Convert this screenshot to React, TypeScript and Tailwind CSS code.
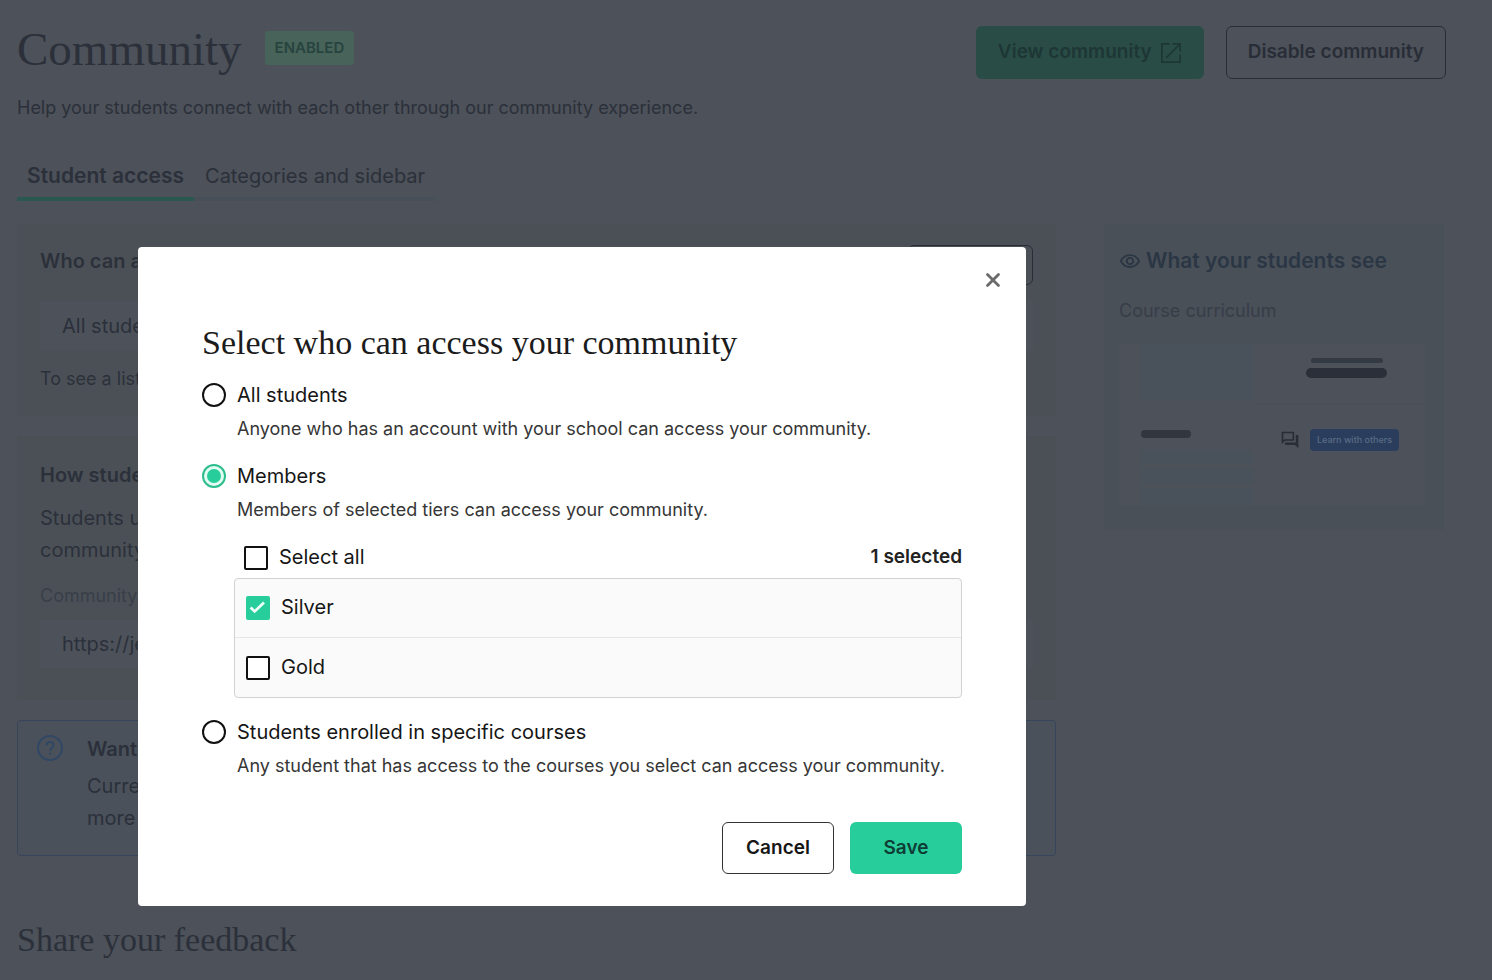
import React, { useState } from 'react';
import clsx from 'clsx';
import { X } from 'lucide-react';
import { MdOutlineForum, MdOutlineRemoveRedEye } from 'react-icons/md';

type Access = 'all' | 'members' | 'courses';

interface RadioOptionProps {
  value: Access;
  label: string;
  description: string;
  selected: Access;
  onSelect: (value: Access) => void;
  children?: React.ReactNode;
}

interface CheckOptionProps {
  label: string;
  checked: boolean;
  onChange: () => void;
}

const TIERS = ['Silver', 'Gold'];

const RadioOption: React.FC<RadioOptionProps> = ({ value, label, description, selected, onSelect, children }) => {
  const isSelected = selected === value;

  return (
    <div>
      <label className="flex h-8 items-center gap-[11px] text-[20px] text-[#161616]">
        <input
          type="radio"
          name="access"
          value={value}
          checked={isSelected}
          onChange={() => onSelect(value)}
          aria-describedby={`${value}-description`}
          className={clsx(
            'grid size-6 shrink-0 appearance-none place-items-center rounded-full border-2 before:rounded-full',
            isSelected
              ? 'border-[#2dbd8d] bg-[#e2fcf4] before:size-3.5 before:bg-[#27ce9b]'
              : 'border-[#111111] bg-white'
          )}
        />
        {label}
      </label>
      <p id={`${value}-description`} className="pl-[35px] text-[18px] leading-9 text-[#363636]">
        {description}
      </p>
      {children}
    </div>
  );
};

const CheckOption: React.FC<CheckOptionProps> = ({ label, checked, onChange }) => (
  <label className="flex items-start gap-[11px] text-[20px] leading-7 text-[#161616]">
    <span className="grid place-items-center pt-[3px]">
      <input
        type="checkbox"
        checked={checked}
        onChange={onChange}
        className={clsx(
          'col-start-1 row-start-1 size-6 appearance-none rounded-[2px]',
          checked ? 'bg-[#27ce9b]' : 'border-2 border-[#111111] bg-white'
        )}
      />
      {checked && (
        <svg viewBox="0 0 24 24" className="pointer-events-none col-start-1 row-start-1 size-6" aria-hidden="true">
          <path d="M4.6 11.4l4.1 4L18 6.6" fill="none" stroke="#effff9" strokeWidth="2.8" />
        </svg>
      )}
    </span>
    {label}
  </label>
);

// Small mock of the curriculum page with the community link
const CurriculumPreview: React.FC = () => (
  <div className="mr-1 grid grid-cols-[135px_1fr] bg-[#4d5159]">
    <div className="pl-[22px]">
      <div className="h-[56px] w-28 bg-[#49515a]"></div>
      <div className="mt-[30px] h-2 w-[50px] rounded-full bg-[#31363f]"></div>
      <div className="mt-3 h-[14px] w-28 bg-[#49515a]"></div>
      <div className="mt-1 h-[16px] w-28 bg-[#49515a]"></div>
      <div className="mt-1 h-[18px] w-28 bg-[#49515a]"></div>
    </div>
    <div>
      <div className="flex h-[61px] flex-col items-center gap-[5px] border-b border-[#4a4e56] pl-3.5 pt-3.5">
        <div className="h-[5px] w-[72px] rounded-full bg-[#343a43]"></div>
        <div className="h-[10px] w-[81px] rounded-full bg-[#2a2f39]"></div>
      </div>
      <div className="flex items-center gap-[10px] pl-[26px] pt-6">
        <MdOutlineForum className="size-5 text-[#282d37]" aria-hidden="true" />
        <a href="#learn" className="flex h-[22px] w-[89px] items-center justify-center rounded-[4px] bg-[#2b3d5c] text-[9px] font-medium text-[#5a6b85]">
          Learn with others
        </a>
      </div>
    </div>
  </div>
);

const CommunityPage: React.FC = () => (
  <div className="min-h-screen bg-[#4d5159] pb-4 pl-[17px] pr-[46px] pt-[26px] text-[#2b303a]">
    <header className="flex items-start justify-between">
      <div className="flex items-start">
        <h1 className="font-['Liberation_Serif',serif] text-[47px] leading-[46px]">Community</h1>
        <span className="ml-[23px] mt-[5px] rounded-[3px] bg-[#486359] px-[10px] text-[15px] font-semibold leading-[34px] text-[#27443f]">
          ENABLED
        </span>
      </div>
      <div className="flex gap-[22px] text-[19px] font-semibold">
        <button className="flex h-[53px] items-center gap-2 rounded-[6px] bg-[#294d46] px-[22px] text-[#1e3635]">
          View community
          <svg viewBox="0 0 22 22" className="size-[22px]" fill="none" stroke="currentColor" strokeWidth="1.7" aria-hidden="true">
            <path d="M9.5 1.9H1.9v18.2h18.2v-7.6M12.5 1.9h7.6v7.6M19.8 2.2L6 16" />
          </svg>
        </button>
        <button className="h-[53px] rounded-[6px] border border-[#282d37] px-[21px] text-[#282d37]">Disable community</button>
      </div>
    </header>
    <p className="mt-[15px] text-[18px] leading-7">Help your students connect with each other through our community experience.</p>

    <nav className="mt-[38px] flex leading-8">
      <a href="#access" className="border-b-4 border-[#2a5750] px-[10px] pb-[5px] text-[21px] font-semibold">Student access</a>
      <a href="#categories" className="border-b-4 border-[#475058] px-[11px] pb-[5px] text-[20px]">Categories and sidebar</a>
    </nav>

    <div className="mt-[23px] grid grid-cols-[1fr_340px] items-start gap-12 pr-0.5">
      <main>
        <section className="h-[192px] bg-[#4b5057] px-[23px] pt-[21px]">
          <div className="flex h-10 items-start justify-between">
            <h2 className="text-[20px] font-semibold leading-8">Who can access</h2>
            <button className="h-10 w-[125px] rounded-[6px] border border-[#282d37] text-[18px] font-semibold">Change</button>
          </div>
          <p className="mt-4 bg-[#4d525a] px-[22px] text-[20px] leading-[50px]">All students</p>
          <p className="mt-3 text-[18px] leading-8">To see a list</p>
        </section>
        <section className="mt-5 h-[264px] border-t border-[#4a4e55] bg-[#4b5057] px-[23px] pt-[22px]">
          <h2 className="text-[20px] font-semibold leading-8">How students</h2>
          <p className="mt-[11px] text-[20px] leading-8">
            Students use
            <br />
            community
          </p>
          <label htmlFor="community-url" className="mt-[14px] block text-[18px] leading-8 text-[#393e48]">Community</label>
          <input id="community-url" readOnly value="https://je" className="mt-2 h-[48px] w-full bg-[#4d525a] px-[22px] text-[20px]" />
        </section>
        <aside className="mt-5 flex h-[136px] gap-6 rounded-[4px] border border-[#36455a] bg-[#4a515a] px-[19px] pt-3">
          <svg viewBox="0 0 26 26" className="mt-0.5 size-[26px] shrink-0" fill="none" stroke="#304766" strokeWidth="2" aria-hidden="true">
            <circle cx="13" cy="13" r="12" />
            <path d="M9.4 10.3C9.6 5.8 16.7 6 16.5 10.1c-.1 2.4-3.4 2.8-3.4 5.9M13.1 18v2" />
          </svg>
          <div className="text-[20px] leading-8">
            <h2 className="mb-[5px] font-semibold">Want</h2>
            <p>
              Current
              <br />
              more
            </p>
          </div>
        </aside>
        <h2 className="mt-16 font-['Liberation_Serif',serif] text-[34px] leading-10">Share your feedback</h2>
      </main>

      <aside className="h-[306px] bg-[#495058] px-[15px] pt-[21px]">
        <h2 className="flex items-center gap-[5px] text-[21px] font-semibold leading-8 text-[#2b3645]">
          <MdOutlineRemoveRedEye className="size-[22px]" aria-hidden="true" />
          What your students see
        </h2>
        <p className="mb-[17px] mt-[18px] text-[18px] leading-8 text-[#383d48]">Course curriculum</p>
        <CurriculumPreview />
      </aside>
    </div>
  </div>
);

export default function App() {
  const [access, setAccess] = useState<Access>('members');
  const [tiers, setTiers] = useState<string[]>(['Silver']);

  const toggleTier = (tier: string) => {
    setTiers(tiers.includes(tier) ? tiers.filter(t => t !== tier) : [...tiers, tier]);
  };

  const allSelected = tiers.length === TIERS.length;

  return (
    <div className="font-[Inter,sans-serif]">
      <CommunityPage />

      <div className="fixed inset-0 flex items-start overflow-hidden pl-[138px] pr-6 pt-[247px]">
        <div
          role="dialog"
          aria-modal="true"
          aria-labelledby="access-title"
          className="relative w-full max-w-[888px] rounded-[4px] bg-white px-16 pb-8 pt-[76px]"
        >
          <button aria-label="Close" className="absolute right-[22px] top-[22px] text-[#6b6b6b]">
            <X className="size-[22px]" strokeWidth={3} />
          </button>

          <h2 id="access-title" className="font-['Liberation_Serif',serif] text-[34px] leading-10 text-[#1b1b1b]">
            Select who can access your community
          </h2>

          <div className="mt-4 flex flex-col gap-[13px]">
            <RadioOption
              value="all"
              label="All students"
              description="Anyone who has an account with your school can access your community."
              selected={access}
              onSelect={setAccess}
            />
            <RadioOption
              value="members"
              label="Members"
              description="Members of selected tiers can access your community."
              selected={access}
              onSelect={setAccess}
            >
              <div className="ml-8 mt-[15px] pb-[5px]">
                <div className="flex items-center justify-between pl-[10px]">
                  <CheckOption label="Select all" checked={allSelected} onChange={() => setTiers(allSelected ? [] : TIERS)} />
                  <span className="text-[19px] font-semibold leading-7 text-[#222222]">{tiers.length} selected</span>
                </div>
                <ul className="mt-[7px] divide-y divide-[#e6e6e6] rounded-[4px] border border-[#d2d2d2] bg-[#fafafa]">
                  {TIERS.map(tier => (
                    <li key={tier} className="flex h-[59px] items-center pb-0.5 pl-[11px]">
                      <CheckOption label={tier} checked={tiers.includes(tier)} onChange={() => toggleTier(tier)} />
                    </li>
                  ))}
                </ul>
              </div>
            </RadioOption>
            <RadioOption
              value="courses"
              label="Students enrolled in specific courses"
              description="Any student that has access to the courses you select can access your community."
              selected={access}
              onSelect={setAccess}
            />
          </div>

          <div className="mt-[38px] flex justify-end gap-4 text-[19px] font-semibold">
            <button className="h-[52px] w-28 rounded-[6px] border border-[#333333] text-[#161616]">Cancel</button>
            <button className="h-[52px] w-28 rounded-[6px] bg-[#27ce9b] text-[#0f3d35]">Save</button>
          </div>
        </div>
      </div>
    </div>
  );
}
